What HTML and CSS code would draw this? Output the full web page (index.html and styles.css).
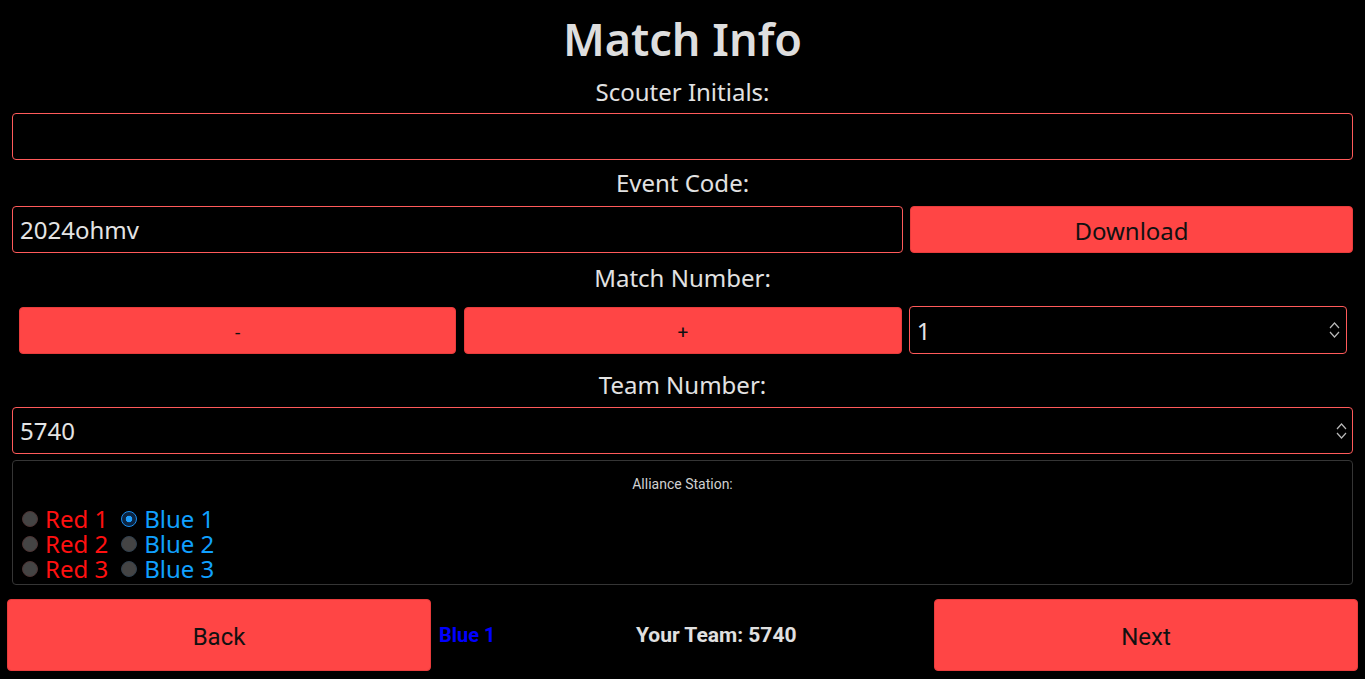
FILE: index.html
```html
<!DOCTYPE html>
<html>
<head>
<meta charset="utf-8">
<link rel="stylesheet" href="styles.css">
</head>
<body>
<main class="page">
  <h1 class="title">Match Info</h1>

  <div class="label l1">Scouter Initials:</div>
  <input class="field f1" type="text" value="">

  <div class="label l2">Event Code:</div>
  <div class="event-row">
    <input class="field" type="text" value="2024ohmv">
    <button class="btn btn-download">Download</button>
  </div>

  <div class="label l3">Match Number:</div>
  <div class="match-row">
    <button class="btn btn-step">-</button>
    <button class="btn btn-step">+</button>
    <div class="numbox">
      <input class="numinput" type="text" value="1">
      <svg class="spin" width="11" height="18" viewBox="0 0 11 18"><path d="M1 7 L5.5 2 L10 7 M1 11 L5.5 16 L10 11" fill="none" stroke="#b8b8b8" stroke-width="1.2"/></svg>
    </div>
  </div>

  <div class="label l4">Team Number:</div>
  <div class="numbox team">
    <input class="numinput" type="text" value="5740">
    <svg class="spin" width="11" height="18" viewBox="0 0 11 18"><path d="M1 7 L5.5 2 L10 7 M1 11 L5.5 16 L10 11" fill="none" stroke="#b8b8b8" stroke-width="1.2"/></svg>
  </div>

  <fieldset class="alliance">
    <div class="alliance-title">Alliance Station:</div>
    <div class="radios">
      <div class="radio-col">
        <label class="radio red"><input type="radio" name="st"><span>Red 1</span></label>
        <label class="radio red"><input type="radio" name="st"><span>Red 2</span></label>
        <label class="radio red"><input type="radio" name="st"><span>Red 3</span></label>
      </div>
      <div class="radio-col">
        <label class="radio blue"><input type="radio" name="st" checked><span>Blue 1</span></label>
        <label class="radio blue"><input type="radio" name="st"><span>Blue 2</span></label>
        <label class="radio blue"><input type="radio" name="st"><span>Blue 3</span></label>
      </div>
    </div>
  </fieldset>
</main>

<footer class="bottom">
  <button class="btn btn-nav">Back</button>
  <div class="status">
    <span class="station">Blue 1</span>
    <span class="team-info">Your Team: 5740</span>
  </div>
  <button class="btn btn-nav">Next</button>
</footer>
</body>
</html>
```

FILE: styles.css
```css
html, body {
  margin: 0;
  padding: 0;
  background: #000;
}
body {
  width: 1365px;
  height: 679px;
  overflow: hidden;
  font-family: "Noto Sans", sans-serif;
  color: #e0e0e0;
}
.page {
  padding: 0 12px;
  display: flex;
  flex-direction: column;
}
.title {
  margin: 0;
  height: 76px;
  line-height: 78px;
  font-size: 45px;
  font-weight: 600;
  text-align: center;
  color: #dedede;
}
.label {
  height: 32px;
  line-height: 32px;
  font-size: 24px;
  text-align: center;
  color: #e2e2e2;
}
.l2 { margin-top: 7px; }
.l3 { margin-top: 9px; }
.l4 { margin-top: 15px; }

.field, .numbox {
  box-sizing: border-box;
  height: 47px;
  border: 1px solid #ff5a5a;
  border-radius: 4px;
  background: #000;
  color: #e4e4e4;
  font-family: "Noto Sans", sans-serif;
  font-size: 24px;
  padding: 0 7px;
  outline: none;
}
.f1 { margin-top: 5px; width: 100%; }

.event-row {
  margin-top: 7px;
  display: grid;
  grid-template-columns: 891fr 443fr;
  gap: 7px;
}
.event-row .field { width: 100%; }

.btn {
  box-sizing: border-box;
  border: 1px solid #e83c3c;
  border-radius: 4px;
  background: #ff4545;
  color: #111;
  cursor: pointer;
  padding: 0;
}
.btn-download {
  height: 47px;
  padding-top: 2px;
  font-family: "Noto Sans", sans-serif;
  font-size: 24px;
}

.match-row {
  margin-top: 12px;
  padding: 0 6px 0 7px;
  display: grid;
  grid-template-columns: 1fr 1fr 1fr;
  gap: 8px;
}
.btn-step {
  height: 47px;
  margin-top: 1px;
  padding-top: 4px;
  font-family: Roboto, sans-serif;
  font-size: 19px;
}
.match-row .numbox {
  margin-left: -1px;
}
.numbox {
  display: flex;
  align-items: center;
  height: 48px;
  padding: 0 6px 0 7px;
}
.numinput {
  flex: 1;
  min-width: 0;
  border: none;
  background: transparent;
  color: #e4e4e4;
  font-family: "Noto Sans", sans-serif;
  font-size: 24px;
  padding: 0;
  outline: none;
}
.spin { flex: none; }
.team {
  margin-top: 6px;
  height: 47px;
  padding-right: 5px;
}

.alliance {
  margin: 6px 0 0 0;
  box-sizing: border-box;
  height: 125px;
  border: 1px solid #353535;
  border-radius: 4px;
  padding: 11px 9px 0 9px;
}
.alliance-title {
  font-family: Roboto, sans-serif;
  font-size: 14px;
  line-height: 24px;
  text-align: center;
  color: #d0d0d0;
}
.radios {
  margin-top: 10px;
  display: flex;
  gap: 13px;
}
.radio-col {
  display: flex;
  flex-direction: column;
}
.radio {
  display: flex;
  align-items: center;
  height: 25px;
  font-size: 24px;
  line-height: 25px;
}
.radio input {
  appearance: none;
  -webkit-appearance: none;
  margin: 0 7px 0 0;
  width: 16px;
  height: 16px;
  border-radius: 50%;
  background: #444;
  border: 1px solid #4d3434;
  box-sizing: border-box;
}
.radio.blue input { border-color: #30404e; }
.radio.blue input:checked {
  background: radial-gradient(circle, #1ea0ff 0 3px, #0c2440 3.6px);
  border: 1.5px solid #1a8ef0;
}
.radio.red span { color: #ff1010; }
.radio.blue span { color: #10a0ff; }

.bottom {
  margin-top: 14px;
  padding: 0 7px;
  display: flex;
  align-items: stretch;
  height: 72px;
}
.btn-nav {
  width: 424px;
  height: 72px;
  padding-top: 3px;
  font-family: Roboto, sans-serif;
  font-size: 24px;
}
.status {
  flex: 1;
  display: flex;
  align-items: center;
  padding: 0 7px 0 8px;
  font-family: Roboto, sans-serif;
  font-weight: 700;
  font-size: 20px;
}
.station { color: #0000ff; }
.team-info {
  flex: 1;
  padding-left: 10px;
  text-align: center;
  font-size: 21px;
  color: #e0e0e0;
}
```
